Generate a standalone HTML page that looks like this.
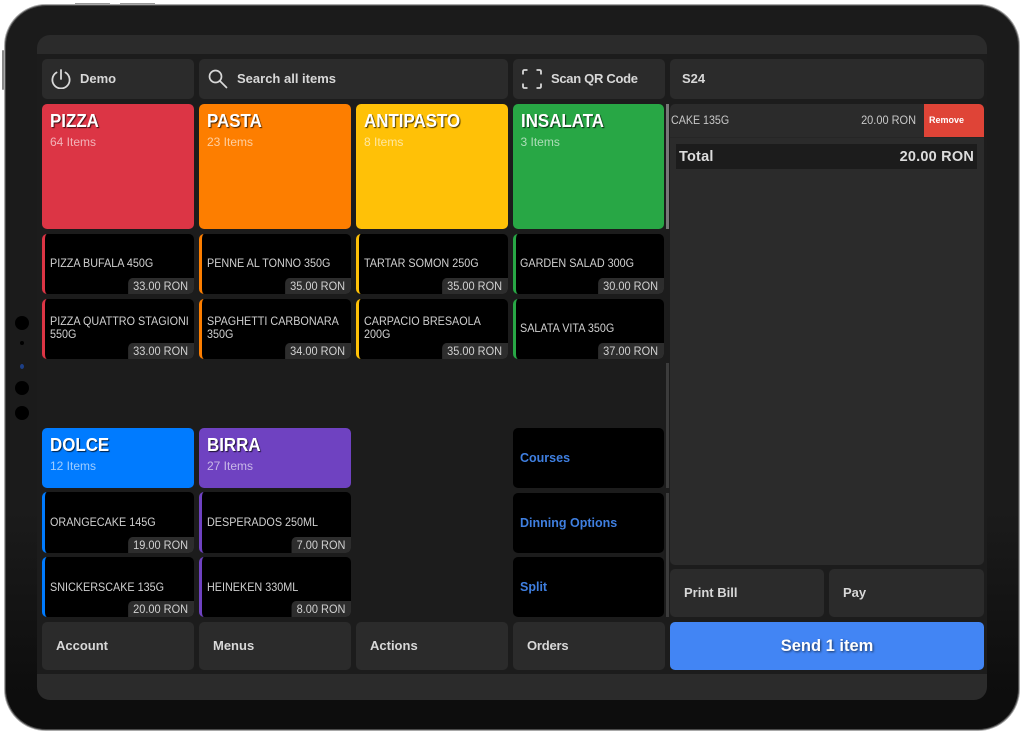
<!DOCTYPE html>
<html><head><meta charset="utf-8">
<style>
html,body{margin:0;padding:0;background:#fff}
body{position:relative;width:1024px;height:735px;overflow:hidden;font-family:"Liberation Sans",sans-serif}
div{position:absolute;box-sizing:border-box}
.frame{left:4px;top:4px;width:1016px;height:727px;border-radius:42px;background:linear-gradient(#1b1b1b 0,#1b1b1b 70%,#0d0d0d 95%);border:1.5px solid #a8a8a8;box-shadow:inset 0 0 0 1px #4a4a4a}
.btn{background:#2b2b2b;border-radius:5px;color:#d8d8d8;font-weight:bold;font-size:13px;line-height:16px;letter-spacing:0;white-space:nowrap}
.btn span{position:absolute}
.cat{border-radius:5px;color:#fff}
.cat b{position:absolute;left:8px;top:6px;font-size:18px;line-height:22px;text-shadow:1px 1px 1px rgba(0,0,0,.75);white-space:nowrap;transform:scaleX(.94);transform-origin:0 50%}
.cat i{position:absolute;left:8px;top:31px;font-style:normal;font-size:12px;line-height:15px;letter-spacing:0;color:rgba(255,255,255,.62);white-space:nowrap}
.item{width:152px;height:60px;background:#000;border-radius:5px;border-left:3px solid;color:#d0d0d0;font-size:12px;line-height:13px;overflow:hidden}
.item p{position:absolute;left:5px;width:158px;margin:0;transform:scaleX(.9);transform-origin:0 50%}
.item em{position:absolute;right:0;bottom:0;background:#2d2d2d;border-radius:5px 0 5px 0;height:16px;font-style:normal;font-size:12px;line-height:16px;padding:0 6.500px 0 5.500px;color:#d0d0d0;white-space:nowrap;transform:scaleX(.915);transform-origin:100% 50%}
.link{width:151.5px;height:60px;background:#000;border-radius:5px;color:#3f7fe0;font-weight:bold;font-size:12.5px;letter-spacing:0;line-height:60px;padding-left:7.5px}
.bar{left:666px;width:3px}
</style></head><body>
<div style="left:2px;top:50px;width:2px;height:40px;background:#888;border-radius:1px"></div>
<div style="left:75px;top:3px;width:35px;height:1.5px;background:#999"></div>
<div style="left:120px;top:3px;width:35px;height:1.5px;background:#999"></div>
<div class="frame"></div>
<div style="left:15px;top:316px;width:14px;height:14px;border-radius:50%;background:#000"></div>
<div style="left:20px;top:341px;width:4px;height:4px;border-radius:50%;background:#000"></div>
<div style="left:20px;top:364px;width:4px;height:5px;border-radius:50%;background:#1d3f86"></div>
<div style="left:15px;top:381px;width:14px;height:14px;border-radius:50%;background:#000"></div>
<div style="left:15px;top:406px;width:14px;height:14px;border-radius:50%;background:#000"></div>

<div style="left:37px;top:35px;width:950px;height:665px;border-radius:13px;background:#2b2b2b;overflow:hidden">
  <div style="left:0;top:19px;width:950px;height:620px;background:#1c1c1c"></div>
</div>

<!-- top row -->
<div class="btn" style="left:42px;top:59px;width:152px;height:40px"><span style="left:38px;top:12px">Demo</span>
  <svg style="position:absolute;left:9px;top:10px" width="20" height="20" viewBox="0 0 20 20" fill="none" stroke="#d8d8d8" stroke-width="1.800" stroke-linecap="round"><path d="M10 1V10"/><path d="M5.500 3.500a8.600 8.600 0 1 0 9 0"/></svg></div>
<div class="btn" style="left:199px;top:59px;width:309px;height:40px"><span style="left:38px;top:12px">Search all items</span>
  <svg style="position:absolute;left:9px;top:10px" width="20" height="20" viewBox="0 0 20 20" fill="none" stroke="#d8d8d8" stroke-width="1.700" stroke-linecap="round"><circle cx="7.500" cy="7.500" r="6"/><path d="M12 12L18.500 18.500"/></svg></div>
<div class="btn" style="left:513px;top:59px;width:152px;height:40px"><span style="left:38px;top:12px;letter-spacing:-.3px">Scan QR Code</span>
  <svg style="position:absolute;left:9px;top:10px" width="20" height="20" viewBox="0 0 20 20" fill="none" stroke="#d8d8d8" stroke-width="1.800"><path d="M1 5.500V2.500Q1 1 2.500 1H5.500M14.500 1h3Q19 1 19 2.500V5.500M19 14.500v3Q19 19 17.500 19H14.500M5.500 19H2.500Q1 19 1 17.500V14.500"/></svg></div>
<div class="btn" style="left:670px;top:59px;width:314px;height:40px"><span style="left:12px;top:12px">S24</span></div>

<!-- categories -->
<div class="cat" style="left:42px;top:104px;width:152px;height:125px;background:#dc3545"><b>PIZZA</b><i>64 Items</i></div>
<div class="cat" style="left:199px;top:104px;width:152px;height:125px;background:#fd7e00"><b>PASTA</b><i>23 Items</i></div>
<div class="cat" style="left:356px;top:104px;width:152px;height:125px;background:#ffc107"><b>ANTIPASTO</b><i>8 Items</i></div>
<div class="cat" style="left:512.5px;top:104px;width:151.5px;height:125px;background:#28a745"><b>INSALATA</b><i>3 Items</i></div>
<div class="bar" style="top:104px;height:125px;background:#777"></div>

<!-- items row 1 -->
<div class="item" style="left:42px;top:234px;border-color:#dc3545"><p style="top:23px">PIZZA BUFALA 450G</p><em>33.00 RON</em></div>
<div class="item" style="left:199px;top:234px;border-color:#fd7e00"><p style="top:23px">PENNE AL TONNO 350G</p><em>35.00 RON</em></div>
<div class="item" style="left:356px;top:234px;border-color:#ffc107"><p style="top:23px">TARTAR SOMON 250G</p><em>35.00 RON</em></div>
<div class="item" style="left:512.5px;top:234px;width:151.5px;border-color:#28a745"><p style="top:23px;left:4.500px">GARDEN SALAD 300G</p><em>30.00 RON</em></div>

<div class="item" style="left:42px;top:299px;border-color:#dc3545"><p style="top:16px">PIZZA QUATTRO STAGIONI 550G</p><em>33.00 RON</em></div>
<div class="item" style="left:199px;top:299px;border-color:#fd7e00"><p style="top:16px">SPAGHETTI CARBONARA 350G</p><em>34.00 RON</em></div>
<div class="item" style="left:356px;top:299px;border-color:#ffc107"><p style="top:16px">CARPACIO BRESAOLA 200G</p><em>35.00 RON</em></div>
<div class="item" style="left:512.5px;top:299px;width:151.5px;border-color:#28a745"><p style="top:23px;left:4.500px">SALATA VITA 350G</p><em>37.00 RON</em></div>

<!-- lower -->
<div class="cat" style="left:42px;top:428px;width:152px;height:60px;background:#007bff"><b>DOLCE</b><i>12 Items</i></div>
<div class="cat" style="left:199px;top:428px;width:152px;height:60px;background:#6f42c1"><b>BIRRA</b><i>27 Items</i></div>
<div class="link" style="left:512.5px;top:428px">Courses</div>

<div class="item" style="left:42px;top:492px;height:61px;border-color:#007bff"><p style="top:24px">ORANGECAKE 145G</p><em>19.00 RON</em></div>
<div class="item" style="left:199px;top:492px;height:61px;border-color:#6f42c1"><p style="top:24px">DESPERADOS 250ML</p><em>7.00 RON</em></div>
<div class="link" style="left:512.5px;top:492.5px">Dinning Options</div>

<div class="item" style="left:42px;top:557px;border-color:#007bff"><p style="top:24px">SNICKERSCAKE 135G</p><em>20.00 RON</em></div>
<div class="item" style="left:199px;top:557px;border-color:#6f42c1"><p style="top:24px">HEINEKEN 330ML</p><em>8.00 RON</em></div>
<div class="link" style="left:512.5px;top:557px;line-height:61px">Split</div>

<div class="bar" style="top:363px;height:125px;background:#3c3c3c"></div>
<div class="bar" style="top:493px;height:124px;background:#3c3c3c"></div>

<!-- bottom row -->
<div class="btn" style="left:42px;top:622px;width:152px;height:48px"><span style="left:14px;top:16px">Account</span></div>
<div class="btn" style="left:199px;top:622px;width:152px;height:48px"><span style="left:14px;top:16px">Menus</span></div>
<div class="btn" style="left:356px;top:622px;width:152px;height:48px"><span style="left:14px;top:16px">Actions</span></div>
<div class="btn" style="left:513px;top:622px;width:152px;height:48px"><span style="left:14px;top:16px;letter-spacing:-.2px">Orders</span></div>

<!-- order panel -->
<div style="left:670px;top:104px;width:314px;height:461px;background:#2b2b2b;border-radius:5px"></div>
<div style="left:670px;top:137px;width:314px;height:1px;background:#262626"></div>
<div style="left:671px;top:113px;color:#c8c8c8;font-size:12px;line-height:14px;white-space:nowrap;transform:scaleX(.89);transform-origin:0 50%">CAKE 135G</div>
<div style="left:816px;top:113px;width:100px;text-align:right;color:#c8c8c8;font-size:12px;line-height:14px;white-space:nowrap;transform:scaleX(.915);transform-origin:100% 50%">20.00 RON</div>
<div style="left:924px;top:104px;width:60px;height:33px;background:#df4437;border-radius:0 5px 0 0;color:#fff;font-size:9px;font-weight:bold;line-height:33px;padding-left:5px">Remove</div>
<div style="left:676px;top:144px;width:301px;height:25px;background:#1c1c1c;color:#ddd;font-weight:bold;font-size:14.500px;line-height:26px;letter-spacing:.2px"><span style="position:absolute;left:3px">Total</span><span style="position:absolute;right:3px">20.00 RON</span></div>

<div class="btn" style="left:670px;top:569px;width:154px;height:48px"><span style="left:14px;top:16px">Print Bill</span></div>
<div class="btn" style="left:829px;top:569px;width:155px;height:48px"><span style="left:14px;top:16px">Pay</span></div>
<div style="left:670px;top:622px;width:314px;height:48px;background:#4285f4;border-radius:5px;color:#fff;font-weight:bold;font-size:16.500px;line-height:48px;text-align:center;text-shadow:1px 1px 2px rgba(0,0,0,.6)">Send 1 item</div>
</body></html>
